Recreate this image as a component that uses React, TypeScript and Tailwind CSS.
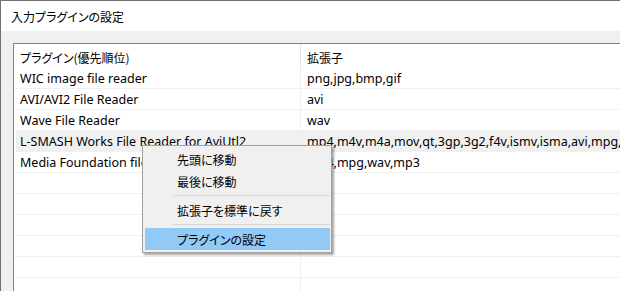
const rows = [
  { name: "WIC image file reader", ext: "png,jpg,bmp,gif" },
  { name: "AVI/AVI2 File Reader", ext: "avi" },
  { name: "Wave File Reader", ext: "wav" },
  {
    name: "L-SMASH Works File Reader for AviUtl2",
    ext: "mp4,m4v,m4a,mov,qt,3gp,3g2,f4v,ismv,isma,avi,mpg,mpeg,ts,m2ts,mkv,webm",
    hot: true,
  },
  { name: "Media Foundation file reader", ext: "mp4,mpg,wav,mp3" },
  { name: "", ext: "" },
  { name: "", ext: "" },
  { name: "", ext: "" },
  { name: "", ext: "" },
  { name: "", ext: "" },
  { name: "", ext: "" },
];

const font = '"Noto Sans", "Noto Sans CJK JP", sans-serif';

// Japanese labels: proportional kana like Yu Gothic UI
const Jp = ({ children }: { children: React.ReactNode }) => (
  <span className="text-[12px] [font-feature-settings:'palt']" style={{ fontFamily: '"Noto Sans CJK JP", sans-serif' }}>
    {children}
  </span>
);

const App = () => {
  return (
    <div
      className="relative w-[620px] h-[291px] overflow-hidden bg-[#f0f0f0] border-l border-t border-[#707070] text-[12.5px] text-black"
      style={{ fontFamily: font }}
    >
      {/* title */}
      <div className="h-[30px] bg-white flex items-center pl-[10px] pt-[1px]">
        <Jp>入力プラグインの設定</Jp>
      </div>

      {/* list */}
      <div className="pt-[12px] pl-[12px]">
        <div className="border-l border-t border-[#828282] bg-white w-[720px]">
          <div className="flex h-[24px]">
            <div className="w-[287px] shrink-0 pl-[6px] pt-[3px] border-r border-[#e5e5e5] h-full flex items-center">
              <Jp>プラグイン(優先順位)</Jp>
            </div>
            <div className="pl-[6px] pt-[3px] flex items-center">
              <Jp>拡張子</Jp>
            </div>
          </div>
          {rows.map((r, i) => (
            <div
              key={i}
              className={`flex h-[21px] border-b border-[#f0f0f0] ${r.hot ? "bg-[#f0f0f0] ml-[2px]" : ""}`}
            >
              <div
                className={`${r.hot ? "w-[285px] pl-[4px]" : "w-[287px] pl-[6px]"} shrink-0 pt-[3px] flex items-center border-r border-[#f0f0f0] whitespace-nowrap overflow-hidden`}
              >
                {r.name}
              </div>
              <div className="pl-[6px] pt-[3px] flex items-center whitespace-nowrap">{r.ext}</div>
            </div>
          ))}
        </div>
      </div>

      {/* context menu */}
      <div className="absolute left-[141px] top-[144px] w-[190px] bg-[#f0f0f0] border border-[#a0a0a0] shadow-[2px_2px_2px_rgba(0,0,0,0.35)] py-[2px] pl-[2px] pr-[1px]">
        <div className="h-[22px] flex items-center pl-[32px] pt-[2px]">
          <Jp>先頭に移動</Jp>
        </div>
        <div className="h-[22px] flex items-center pl-[32px] pt-[2px]">
          <Jp>最後に移動</Jp>
        </div>
        <div className="h-[7px] flex items-center pl-[28px]">
          <div className="h-px w-full bg-[#d7d7d7]" />
        </div>
        <div className="h-[22px] flex items-center pl-[32px] pt-[2px]">
          <Jp>拡張子を標準に戻す</Jp>
        </div>
        <div className="h-[7px] flex items-center pl-[28px]">
          <div className="h-px w-full bg-[#d7d7d7]" />
        </div>
        <div className="h-[22px] flex items-center pl-[32px] pt-[2px] bg-[#91c9f7]">
          <Jp>プラグインの設定</Jp>
        </div>
      </div>
    </div>
  );
};

export default App;
